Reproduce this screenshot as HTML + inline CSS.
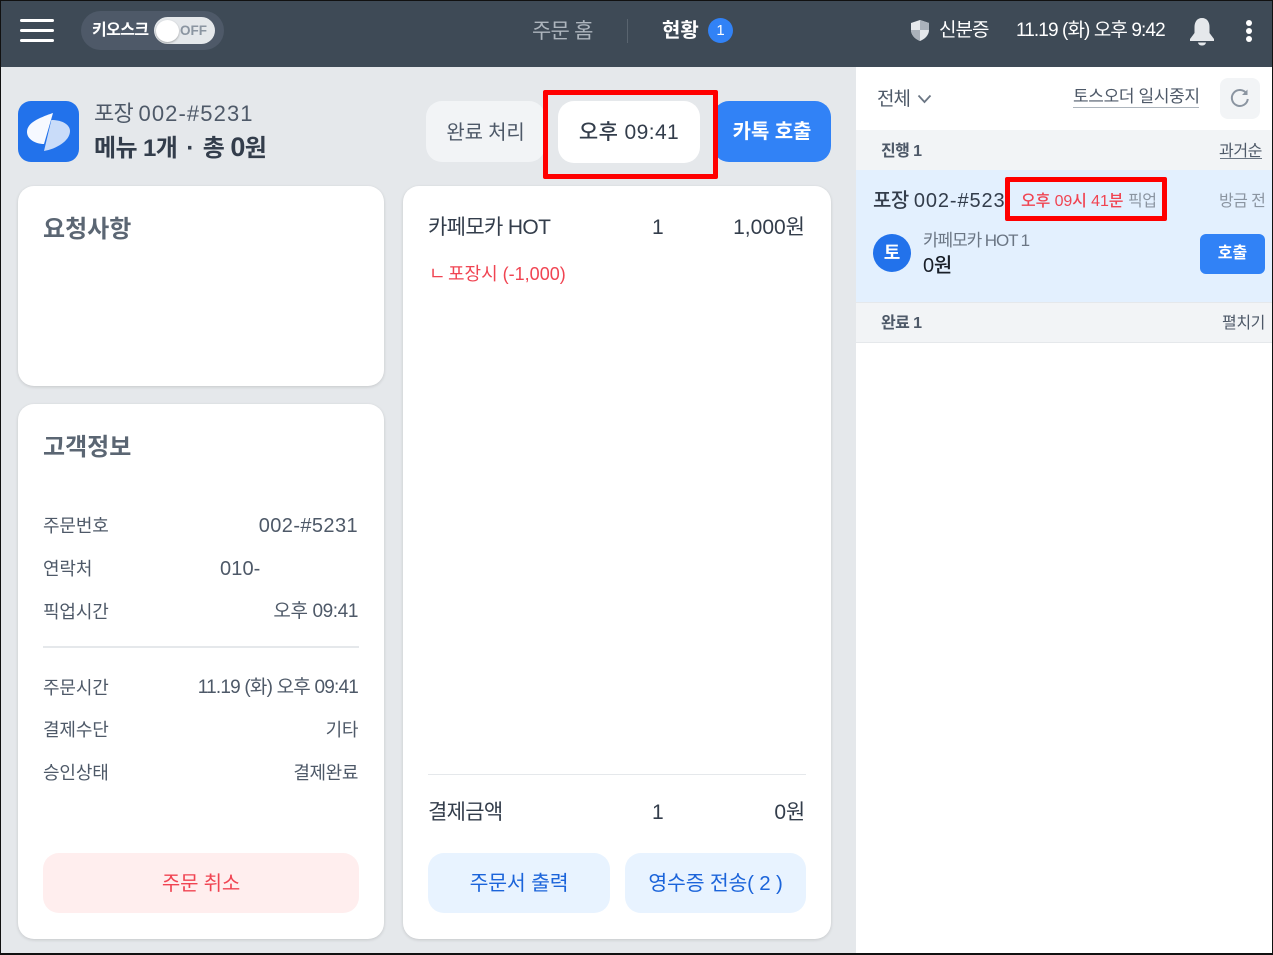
<!DOCTYPE html>
<html lang="ko"><head><meta charset="utf-8"><style>
*{box-sizing:border-box;margin:0;padding:0}
html,body{width:1273px;height:955px;overflow:hidden;background:#e5e8eb}
body{position:relative;font-family:"Liberation Sans","Noto Sans CJK KR",sans-serif;color:#333d4b}
.a,.t{position:absolute}
.t{white-space:nowrap;line-height:30px;height:30px;letter-spacing:-.4px}
.r{text-align:right}
.c{text-align:center}
.card{position:absolute;background:#fff;border-radius:16px;box-shadow:0 1px 3px rgba(0,0,0,.14)}
.g{color:#4e5968}
.h{color:#5b6673}
.f{position:absolute;left:0;top:0;width:1273px;height:955px;border:1px solid #111;border-width:1px 1px 2px 1px;pointer-events:none}
</style></head><body>
<div class="a" style="left:0;top:0;width:1273px;height:67px;background:#3e4a56"></div>
<div class="a" style="left:20px;top:19px;width:34px;height:3px;background:#fff;border-radius:2px"></div>
<div class="a" style="left:20px;top:29px;width:34px;height:3px;background:#fff;border-radius:2px"></div>
<div class="a" style="left:20px;top:39px;width:34px;height:3px;background:#fff;border-radius:2px"></div>
<div class="a" style="left:81px;top:11px;width:143px;height:39px;background:#4e5968;border-radius:20px"></div>
<div class="t" style="left:92px;top:16px;font-size:16px;font-weight:700;color:#fff;letter-spacing:-.6px">키오스크</div>
<div class="a" style="left:154px;top:17px;width:61px;height:27px;background:#e5e8eb;border-radius:14px"></div>
<div class="a" style="left:156px;top:20px;width:23px;height:22px;background:#fff;border-radius:50%;box-shadow:0 1px 2px rgba(0,0,0,.3)"></div>
<div class="t" style="left:180px;top:16px;font-size:13.500px;font-weight:700;color:#8b95a1;letter-spacing:0">OFF</div>
<div class="t" style="left:532px;top:17px;font-size:21px;color:#adb5bd;letter-spacing:-.8px">주문 홈</div>
<div class="a" style="left:627px;top:19px;width:1px;height:24px;background:#59646f"></div>
<div class="t" style="left:662px;top:16px;font-size:20px;font-weight:700;color:#fff;letter-spacing:0">현황</div>
<div class="a c" style="left:708px;top:18px;width:25px;height:25px;border-radius:50%;background:#3182f6;color:#fff;font-size:15px;font-weight:500;line-height:25px">1</div>
<svg class="a" style="left:909px;top:19px" width="22" height="23" viewBox="0 0 22 23"><path d="M11 1L20 4V11C20 16 16 20 11 22C6 20 2 16 2 11V4Z" fill="#e5e8eb"/><path d="M11 1L20 4V11H11ZM11 11V22C6 20 2 16 2 11Z" fill="#aab2bb"/></svg>
<div class="t" style="left:939px;top:16px;font-size:19px;color:#fff;letter-spacing:-1px">신분증</div>
<div class="t" style="left:1016px;top:16px;font-size:19px;color:#fff;letter-spacing:-.9px">11.19 (화) 오후 9:42</div>
<svg class="a" style="left:1189px;top:17px" width="26" height="29" viewBox="0 0 26 29"><path d="M13 1C8 1 5.500 5 5.500 10V16L1 22V24H25V22L20.500 16V10C20.500 5 18 1 13 1Z" fill="#e5e8eb"/><path d="M9 25.500H17C16.500 28 14.500 28.500 13 28.500S9.500 28 9 25.500Z" fill="#e5e8eb"/></svg>
<div class="a" style="left:1246px;top:20px;width:6px;height:6px;border-radius:50%;background:#fff"></div>
<div class="a" style="left:1246px;top:28px;width:6px;height:6px;border-radius:50%;background:#fff"></div>
<div class="a" style="left:1246px;top:36px;width:6px;height:6px;border-radius:50%;background:#fff"></div>

<div class="a" style="left:18px;top:101px;width:61px;height:61px;border-radius:13px;background:#2272eb"></div>
<svg class="a" style="left:18px;top:101px" width="61" height="61" viewBox="0 0 61 61"><path d="M35 12L26 43C17 43 9 38 9 31C9 25 14 21 20 18C26 15 32 13 35 12Z" fill="#f6f9ff"/><path d="M35 12L26 50C38 48 52 40 52 30C52 24 45 19 33.400 19Z" fill="#c9dcf9"/></svg>
<div class="t g" style="left:94px;top:99px;font-size:22px;letter-spacing:-.7px">포장 <span style="letter-spacing:1.100px">002-#5231</span></div>
<div class="t" style="left:94px;top:132px;font-size:24px;font-weight:700;letter-spacing:-.6px">메뉴 1개 <span style="margin:0 3px">·</span> 총 <span style="font-size:27px">0</span>원</div>

<div class="a c g" style="left:426px;top:101px;width:119px;height:61px;border-radius:16px;background:#f2f4f6;line-height:64px;font-size:20px;letter-spacing:-.2px">완료 처리</div>
<div class="a c" style="left:558px;top:101px;width:142px;height:62px;border-radius:16px;background:#fff;line-height:63px;font-size:21px;font-weight:500;letter-spacing:.4px">오후 09:41</div>
<div class="a c" style="left:713px;top:101px;width:118px;height:61px;border-radius:16px;background:#3182f6;color:#fff;line-height:63px;font-size:20px;font-weight:700;letter-spacing:-.1px">카톡 호출</div>
<div class="a" style="left:543px;top:90px;width:175px;height:89px;border:5px solid #f00;border-radius:2px"></div>

<div class="card" style="left:18px;top:186px;width:366px;height:200px"></div>
<div class="t h" style="left:43px;top:215px;font-size:24px;font-weight:700;letter-spacing:0">요청사항</div>

<div class="card" style="left:18px;top:404px;width:366px;height:535px"></div>
<div class="t h" style="left:43px;top:433px;font-size:24px;font-weight:700;letter-spacing:0">고객정보</div>
<div class="t g" style="left:43px;top:511px;font-size:18px;letter-spacing:-.15px">주문번호</div>
<div class="t g r" style="right:915px;top:511px;font-size:20px;letter-spacing:.4px">002-#5231</div>
<div class="t g" style="left:43px;top:554px;font-size:18px;letter-spacing:-.15px">연락처</div>
<div class="t g" style="left:220px;top:554px;font-size:20px;letter-spacing:.1px">010-</div>
<div class="t g" style="left:43px;top:597px;font-size:18px;letter-spacing:-.15px">픽업시간</div>
<div class="t g r" style="right:915px;top:597px;font-size:19px;letter-spacing:-.4px">오후 09:41</div>
<div class="a" style="left:43px;top:646px;width:316px;height:2px;background:#e5e8eb"></div>
<div class="t g" style="left:43px;top:673px;font-size:18px;letter-spacing:-.15px">주문시간</div>
<div class="t g r" style="right:915px;top:673px;font-size:19px;letter-spacing:-.8px">11.19 (화) 오후 09:41</div>
<div class="t g" style="left:43px;top:715px;font-size:18px;letter-spacing:-.15px">결제수단</div>
<div class="t g r" style="right:915px;top:715px;font-size:18px">기타</div>
<div class="t g" style="left:43px;top:758px;font-size:18px;letter-spacing:-.15px">승인상태</div>
<div class="t g r" style="right:915px;top:758px;font-size:18px">결제완료</div>
<div class="a c" style="left:43px;top:853px;width:316px;height:60px;border-radius:16px;background:#ffeeee;color:#f04452;line-height:62px;font-size:20px;letter-spacing:-.2px">주문 취소</div>

<div class="card" style="left:403px;top:186px;width:428px;height:753px"></div>
<div class="t" style="left:428px;top:213px;font-size:21px;letter-spacing:-.65px">카페모카 HOT</div>
<div class="t" style="left:652px;top:213px;font-size:21px">1</div>
<div class="t r" style="right:468px;top:213px;font-size:21px;letter-spacing:0">1,000원</div>
<div class="t" style="left:429px;top:259px;font-size:18px;color:#f04452">ㄴ</div>
<div class="t" style="left:448px;top:259px;font-size:18px;color:#f04452;letter-spacing:0">포장시 (-1,000)</div>
<div class="a" style="left:428px;top:774px;width:378px;height:1px;background:#e5e8eb"></div>
<div class="t" style="left:428px;top:798px;font-size:21px;letter-spacing:-.7px">결제금액</div>
<div class="t" style="left:652px;top:798px;font-size:21px">1</div>
<div class="t r" style="right:468px;top:798px;font-size:21px;letter-spacing:-.2px">0원</div>
<div class="a c" style="left:428px;top:853px;width:182px;height:60px;border-radius:16px;background:#e8f3ff;color:#1b64da;line-height:62px;font-size:20.500px;letter-spacing:-.2px">주문서 출력</div>
<div class="a c" style="left:625px;top:853px;width:181px;height:60px;border-radius:16px;background:#e8f3ff;color:#1b64da;line-height:62px;font-size:20.500px;letter-spacing:-.2px">영수증 전송( 2 )</div>

<div class="a" style="left:856px;top:67px;width:417px;height:888px;background:#fff"></div>
<div class="t g" style="left:877px;top:85px;font-size:19px;letter-spacing:-1px">전체</div>
<svg class="a" style="left:917px;top:94px" width="15" height="10" viewBox="0 0 15 10"><path d="M1.500 1.500L7.500 8L13.500 1.500" fill="none" stroke="#6b7684" stroke-width="1.800"/></svg>
<div class="t g" style="left:1073px;top:82px;font-size:17px;letter-spacing:-.35px">토스오더 일시중지</div>
<div class="a" style="left:1073px;top:107px;width:126px;height:1px;background:#adb5bd"></div>
<div class="a" style="left:1220px;top:78px;width:40px;height:41px;border-radius:8px;background:#f2f4f6"></div>
<svg class="a" style="left:1229px;top:87px" width="22" height="22" viewBox="0 0 22 22"><path d="M17.500 6.500A8 8 0 1 0 18.800 12" fill="none" stroke="#8b95a1" stroke-width="2"/><path d="M18.500 2.500V8H13Z" fill="#8b95a1"/></svg>

<div class="a" style="left:856px;top:130px;width:417px;height:40px;background:#f2f4f6"></div>
<div class="t" style="left:881px;top:137px;font-size:16px;font-weight:700;color:#4e5968;letter-spacing:-.6px">진행 1</div>
<div class="t g" style="left:1219px;top:137px;font-size:16px;letter-spacing:-.4px">과거순</div>
<div class="a" style="left:1220px;top:158px;width:42px;height:1px;background:#6b7684"></div>

<div class="a" style="left:856px;top:170px;width:417px;height:132px;background:#e3f0fe"></div>
<div class="t" style="left:873px;top:186px;font-size:20px;letter-spacing:-.5px;font-weight:500;width:132px;overflow:hidden">포장 <span style="letter-spacing:.9px">002-#5231</span></div>
<div class="a" style="left:1005px;top:177px;width:162px;height:44px;border:5px solid #f00;border-radius:2px"></div>
<div class="t" style="left:1021px;top:187px;font-size:16px;font-weight:500;color:#f04452;letter-spacing:-.1px">오후 09시 41분</div>
<div class="t" style="left:1128px;top:187px;font-size:16px;color:#8b95a1;letter-spacing:-.5px">픽업</div>
<div class="t" style="left:1219px;top:187px;font-size:16px;color:#8b95a1;letter-spacing:-.6px">방금 전</div>
<div class="a c" style="left:873px;top:234px;width:38px;height:38px;border-radius:50%;background:#2272eb;color:#fff;font-size:18px;font-weight:700;line-height:38px">토</div>
<div class="t" style="left:923px;top:226px;font-size:17px;color:#6b7684;letter-spacing:-1.100px">카페모카 HOT 1</div>
<div class="t" style="left:923px;top:251px;font-size:20px;color:#191f28;letter-spacing:-.3px;font-weight:500">0원</div>
<div class="a c" style="left:1200px;top:234px;width:65px;height:40px;border-radius:6px;background:#3182f6;color:#fff;font-size:16px;font-weight:700;line-height:40px">호출</div>

<div class="a" style="left:856px;top:302px;width:417px;height:41px;background:#f2f4f6;border-top:1px solid #e5e8eb;border-bottom:1px solid #e5e8eb"></div>
<div class="t" style="left:881px;top:309px;font-size:16px;font-weight:700;color:#4e5968;letter-spacing:-.6px">완료 1</div>
<div class="t g" style="left:1222px;top:309px;font-size:16px;letter-spacing:-.4px">펼치기</div>
<div class="f"></div>
</body></html>
